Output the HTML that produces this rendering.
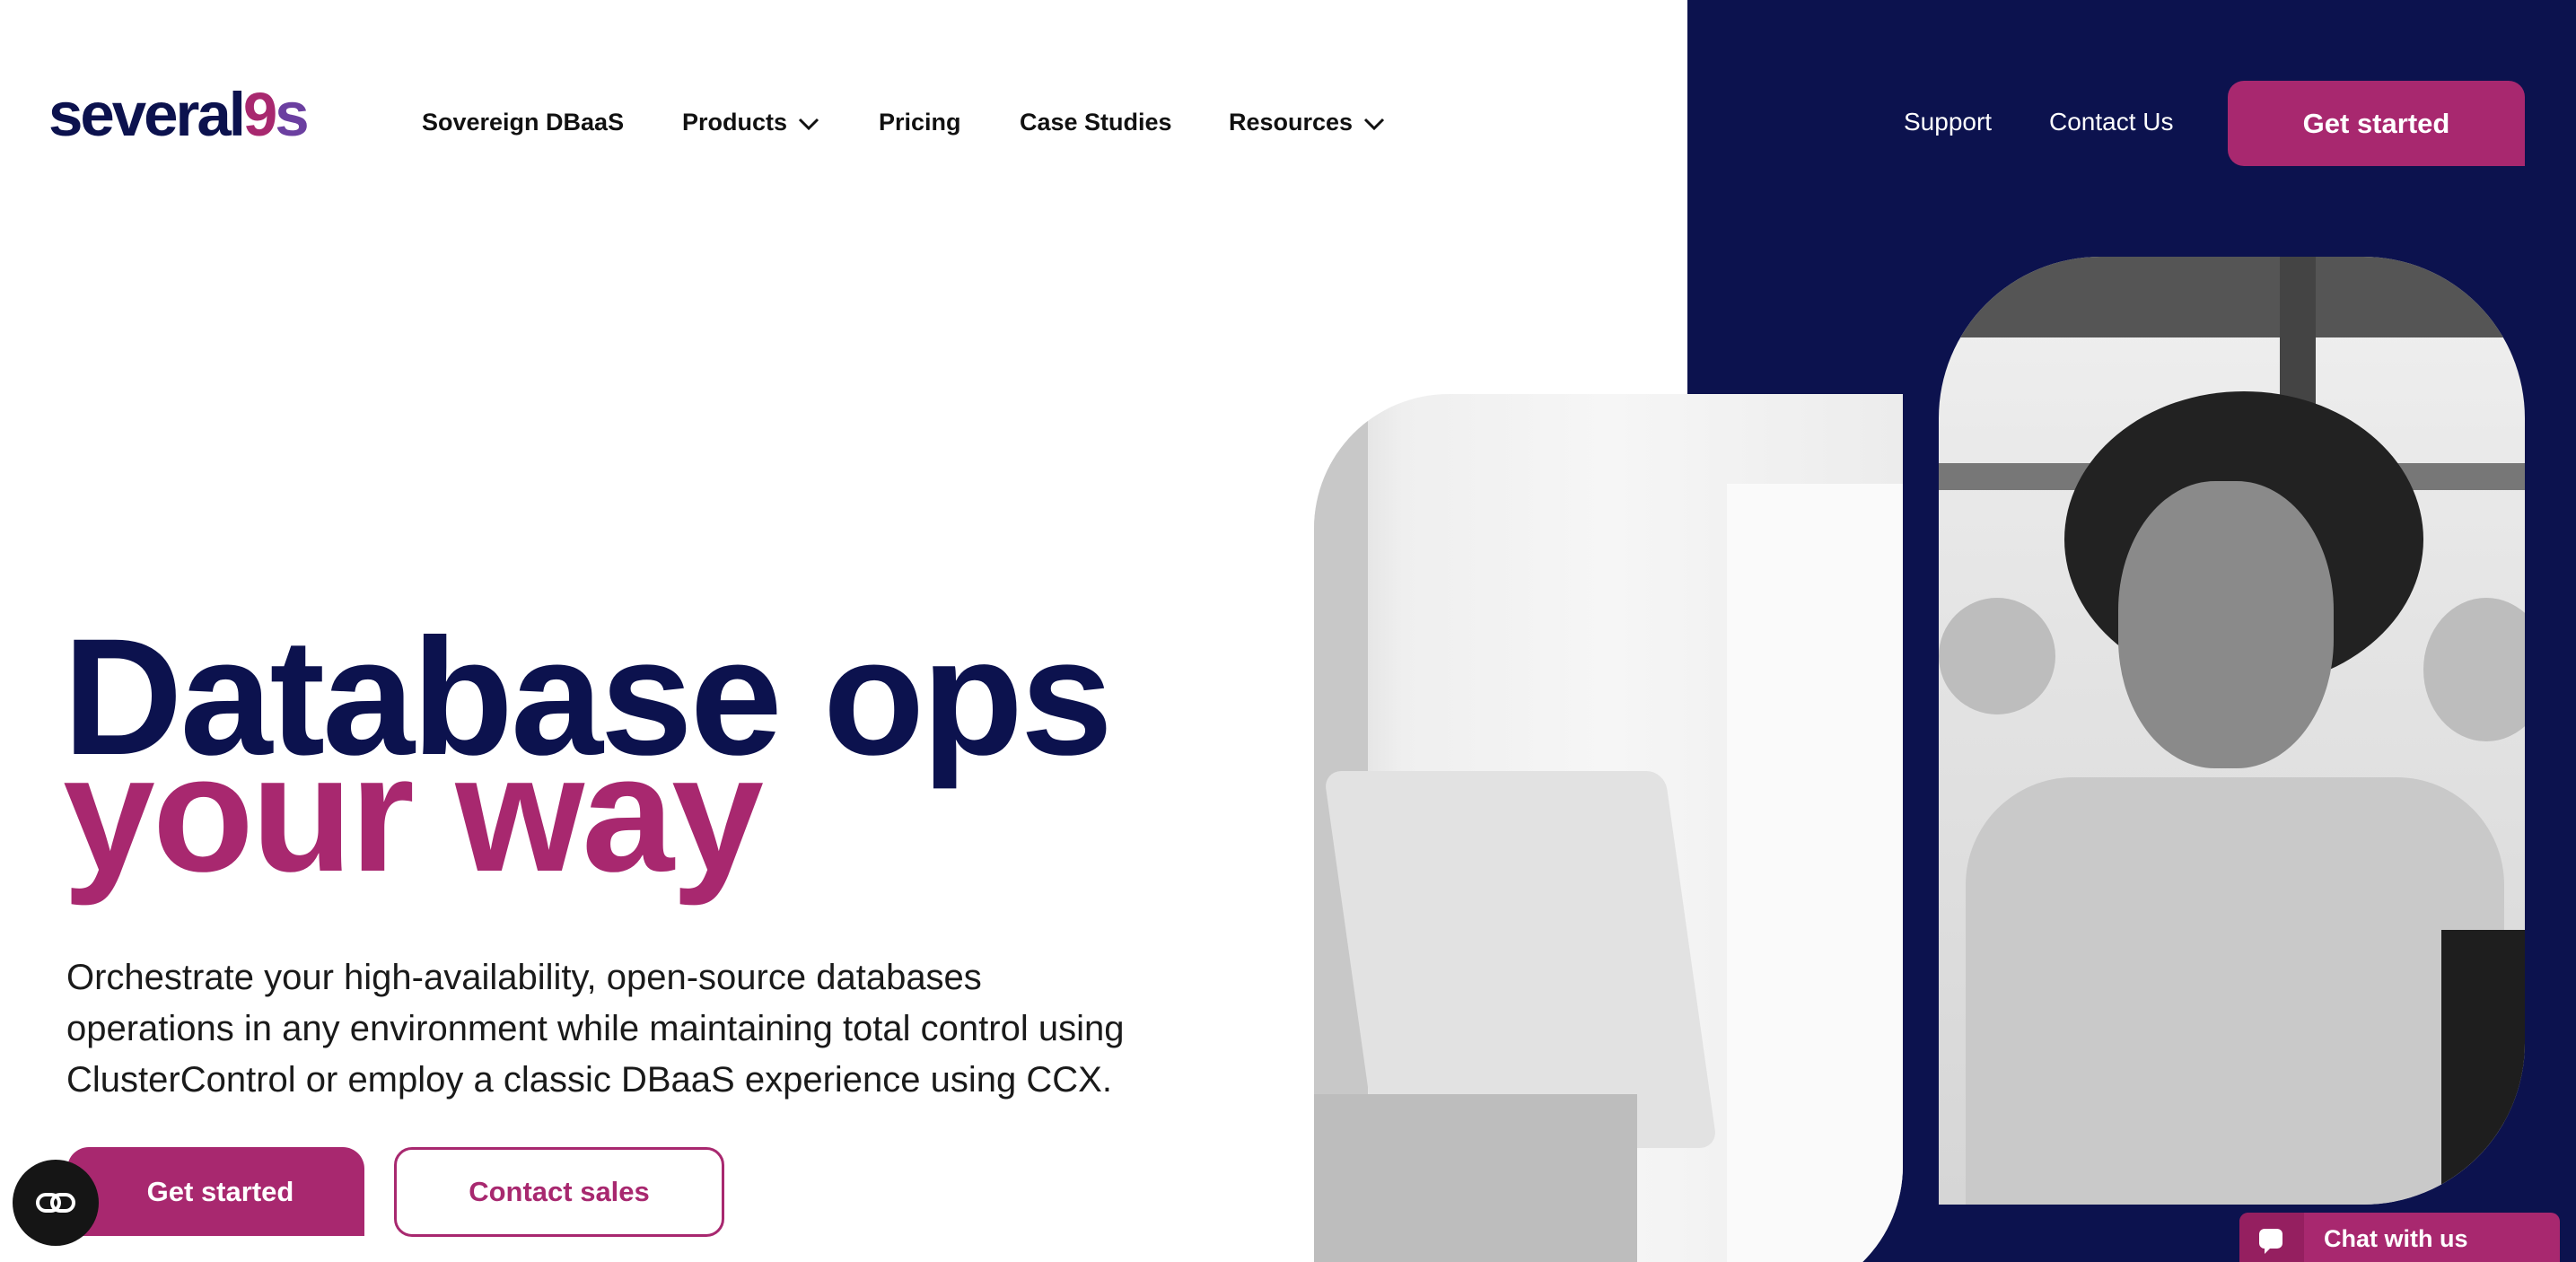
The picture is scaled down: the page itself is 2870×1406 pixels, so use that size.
<!DOCTYPE html>
<html><head><meta charset="utf-8"><style>
*{margin:0;padding:0;box-sizing:border-box}
html,body{width:2870px;height:1406px;overflow:hidden}
body{background:#fff;font-family:"Liberation Sans",sans-serif;position:relative}
.navy{position:absolute;left:1880px;top:0;width:990px;height:1406px;background:#0c124e}
.logo{position:absolute;left:54px;top:88px;font-weight:bold;font-size:69px;color:#0c124e;letter-spacing:-3px}
.logo .n{color:#a8286f}.logo .s{color:#6b3fa0}
.nav{position:absolute;top:121px;font-size:27px;font-weight:bold;color:#111}
.nav svg{vertical-align:middle;margin-left:12px}
.rnav{position:absolute;top:120px;font-size:28px;color:#fff}
.btn{position:absolute;left:2482px;top:90px;width:331px;height:95px;background:#a8286f;border-radius:18px 18px 0 18px;color:#fff;font-weight:bold;font-size:31px;text-align:center;line-height:95px}
h1{position:absolute;left:70px;top:712px;font-size:185px;line-height:130px;font-weight:bold;letter-spacing:-3px;color:#0c124e}
h1 span{color:#a8286f}
p{position:absolute;left:74px;top:1061px;white-space:nowrap;font-size:40px;line-height:57px;color:#1a1a1a}
.b1{position:absolute;left:75px;top:1278px;width:331px;height:99px;background:#a8286f;border-radius:24px 24px 0 0;color:#fff;font-weight:bold;font-size:31px;text-align:center;line-height:99px;padding-left:10px}
.b2{position:absolute;left:439px;top:1278px;width:368px;height:100px;border:3px solid #a8286f;border-radius:20px;color:#a8286f;font-weight:bold;font-size:31px;text-align:center;line-height:94px}
.circ{position:absolute;left:14px;top:1292px;width:96px;height:96px;border-radius:50%;background:#151515}
.p1{position:absolute;left:1464px;top:439px;width:656px;height:1010px;border-radius:150px 0 150px 0;overflow:hidden;background:linear-gradient(90deg,#d8d8d8 0%,#efefef 15%,#f6f6f6 50%,#ececec 100%)}
.p2{position:absolute;left:2160px;top:286px;width:653px;height:1056px;border-radius:180px 180px 180px 0;overflow:hidden;background:linear-gradient(180deg,#f0f0f0 0%,#e4e4e4 40%,#d6d6d6 100%)}
.chat{position:absolute;left:2495px;top:1351px;width:357px;height:55px;background:#a8286f;border-radius:10px 10px 0 0;color:#fff;font-weight:bold;font-size:27px;line-height:58px;overflow:hidden}
</style></head><body>
<div class="navy"></div>
<div class="logo">several<span class="n">9</span><span class="s">s</span></div>
<div class="nav" style="left:470px">Sovereign DBaaS</div>
<div class="nav" style="left:760px">Products<svg width="24" height="14" viewBox="0 0 24 14"><path d="M2 2l10 10 10-10" stroke="#111" stroke-width="3" fill="none"/></svg></div>
<div class="nav" style="left:979px">Pricing</div>
<div class="nav" style="left:1136px">Case Studies</div>
<div class="nav" style="left:1369px">Resources<svg width="24" height="14" viewBox="0 0 24 14"><path d="M2 2l10 10 10-10" stroke="#111" stroke-width="3" fill="none"/></svg></div>
<div class="rnav" style="left:2121px">Support</div>
<div class="rnav" style="left:2283px">Contact Us</div>
<div class="btn">Get started</div>
<h1>Database ops<br><span>your way</span></h1>
<p>Orchestrate your high-availability, open-source databases<br>operations in any environment while maintaining total control using<br>ClusterControl or employ a classic DBaaS experience using CCX.</p>
<div class="b1">Get started</div>
<div class="b2">Contact sales</div>
<div class="circ"><svg width="96" height="96" viewBox="0 0 96 96"><rect x="28" y="39" width="24" height="18" rx="9" fill="none" stroke="#fff" stroke-width="4"/><rect x="44" y="39" width="24" height="18" rx="9" fill="none" stroke="#fff" stroke-width="4"/></svg></div>
<div class="p1">
<div style="position:absolute;left:0;top:0;width:60px;height:1010px;background:#c8c8c8"></div>
<div style="position:absolute;left:40px;top:420px;width:380px;height:420px;background:#e2e2e2;border-radius:20px;transform:skewX(8deg)"></div>
<div style="position:absolute;left:0;top:780px;width:360px;height:230px;background:#bdbdbd"></div>
<div style="position:absolute;left:460px;top:100px;width:200px;height:910px;background:#fafafa"></div>
</div>
<div class="p2">
<div style="position:absolute;left:0;top:0;width:653px;height:90px;background:#555"></div>
<div style="position:absolute;left:380px;top:0;width:40px;height:300px;background:#444"></div>
<div style="position:absolute;left:0;top:230px;width:653px;height:30px;background:#777"></div>
<div style="position:absolute;left:140px;top:150px;width:400px;height:330px;border-radius:50%;background:#222"></div>
<div style="position:absolute;left:200px;top:250px;width:240px;height:320px;border-radius:45%;background:#8a8a8a"></div>
<div style="position:absolute;left:0;top:380px;width:130px;height:130px;border-radius:50%;background:#bdbdbd"></div>
<div style="position:absolute;left:540px;top:380px;width:140px;height:160px;border-radius:50%;background:#bdbdbd"></div>
<div style="position:absolute;left:30px;top:580px;width:600px;height:500px;border-radius:120px 120px 0 0;background:#c9c9c9"></div>
<div style="position:absolute;left:560px;top:750px;width:93px;height:306px;background:#1e1e1e"></div>
</div>
<div class="chat"><div style="position:absolute;left:0;top:0;width:72px;height:60px;background:#951f60"></div><svg style="position:absolute;left:20px;top:16px" width="32" height="32" viewBox="0 0 32 32"><rect x="2" y="2" width="26" height="22" rx="6" fill="#fff"/><path d="M8 22l0 8 7-7z" fill="#fff"/></svg><span style="position:absolute;left:94px">Chat with us</span></div>
</body></html>
